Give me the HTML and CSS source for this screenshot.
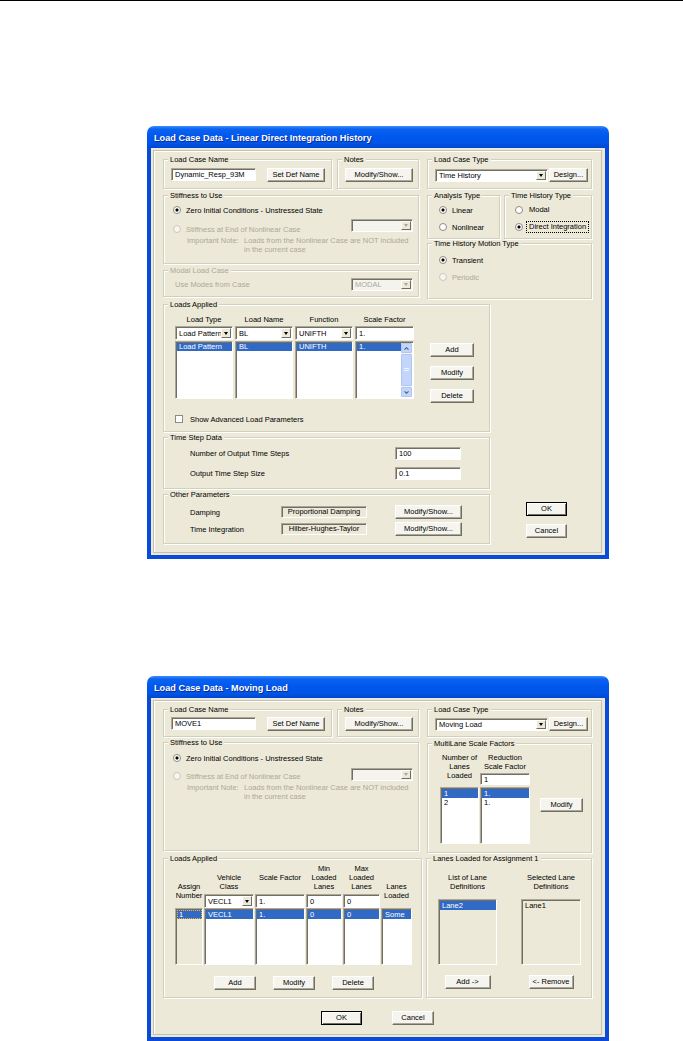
FILE: index.html
```html
<!DOCTYPE html>
<html lang="en">
<head>
    <meta charset="UTF-8">
    <title>Load Case Data</title>
    <link rel="stylesheet" href="styles.css">
</head>
<body>
<div class="top-rule"></div>
<div class="page">

    <!-- Linear Direct Integration History -->
    <div class="dialog dlg-history">
        <div class="titlebar">Load Case Data - Linear Direct Integration History</div>
        <div class="frame">
            <div class="panel">
                <div class="row row-a">
                    <div class="group g-name">
                        <span class="cap">Load Case Name</span>
                        <div class="line">
                            <div class="edit w-name">Dynamic_Resp_93M</div>
                            <button class="btn w-setdef">Set Def Name</button>
                        </div>
                    </div>
                    <div class="group g-notes">
                        <span class="cap">Notes</span>
                        <div class="line"><button class="btn w-modshow">Modify/Show...</button></div>
                    </div>
                    <div class="group g-type">
                        <span class="cap">Load Case Type</span>
                        <div class="line">
                            <div class="combo w-casetype"><span class="combo-text">Time History</span><span class="drop"></span></div>
                            <button class="btn w-design">Design...</button>
                        </div>
                    </div>
                </div>

                <div class="row row-b">
                    <div class="col-main">
                        <div class="group g-stiff">
                            <span class="cap">Stiffness to Use</span>
                            <div class="opt opt-1"><span class="radio on"></span><span class="opt-label">Zero Initial Conditions - Unstressed State</span></div>
                            <div class="opt opt-2 off">
                                <span class="radio"></span><span class="opt-label">Stiffness at End of Nonlinear Case</span>
                                <div class="combo combo-off w-nlcase"><span class="combo-text"></span><span class="drop"></span></div>
                            </div>
                            <div class="note off">
                                <span class="note-head">Important Note:</span>
                                <span>Loads from the Nonlinear Case are NOT included<br>in the current case</span>
                            </div>
                        </div>
                        <div class="group g-modal off">
                            <span class="cap">Modal Load Case</span>
                            <div class="line modal-line">
                                <span>Use Modes from Case</span>
                                <div class="combo combo-off w-nlcase"><span class="combo-text">MODAL</span><span class="drop"></span></div>
                            </div>
                        </div>
                    </div>
                    <div class="col-side">
                        <div class="pair">
                            <div class="group g-analysis">
                                <span class="cap">Analysis Type</span>
                                <div class="opt opt-1"><span class="radio on"></span><span class="opt-label">Linear</span></div>
                                <div class="opt opt-2"><span class="radio"></span><span class="opt-label">Nonlinear</span></div>
                            </div>
                            <div class="group g-thtype">
                                <span class="cap">Time History Type</span>
                                <div class="opt opt-1"><span class="radio"></span><span class="opt-label">Modal</span></div>
                                <div class="opt opt-2"><span class="radio on"></span><span class="opt-label focus">Direct Integration</span></div>
                            </div>
                        </div>
                        <div class="group g-motion">
                            <span class="cap">Time History Motion Type</span>
                            <div class="opt opt-1"><span class="radio on"></span><span class="opt-label">Transient</span></div>
                            <div class="opt opt-2 off"><span class="radio"></span><span class="opt-label">Periodic</span></div>
                        </div>
                    </div>
                </div>

                <div class="row row-c">
                    <div class="col-lower">
                        <div class="group g-loads">
                            <span class="cap">Loads Applied</span>
                            <div class="loads-body">
                                <div class="ld-grid">
                                    <div class="ld-head">Load Type</div>
                                    <div class="ld-head">Load Name</div>
                                    <div class="ld-head">Function</div>
                                    <div class="ld-head">Scale Factor</div>
                                    <div class="combo"><span class="combo-text">Load Pattern</span><span class="drop"></span></div>
                                    <div class="combo"><span class="combo-text">BL</span><span class="drop"></span></div>
                                    <div class="combo"><span class="combo-text">UNIFTH</span><span class="drop"></span></div>
                                    <div class="edit">1.</div>
                                    <div class="list"><div class="item sel">Load Pattern</div></div>
                                    <div class="list"><div class="item sel">BL</div></div>
                                    <div class="list"><div class="item sel">UNIFTH</div></div>
                                    <div class="list list-scroll">
                                        <div class="list-items"><div class="item sel">1.</div></div>
                                        <div class="sbar">
                                            <span class="sb-btn"><svg width="5" height="3" viewBox="0 0 5 3"><path d="M0.5 2.7 L2.5 0.7 L4.5 2.7" stroke="#4D6185" stroke-width="1.1" fill="none"/></svg></span>
                                            <span class="sb-thumb"><svg width="5" height="4" viewBox="0 0 5 4"><path d="M0 0.5h5M0 2.5h5" stroke="#F2F6FF" stroke-width="1"/></svg></span>
                                            <span class="sb-btn"><svg width="5" height="3" viewBox="0 0 5 3"><path d="M0.5 0.3 L2.5 2.3 L4.5 0.3" stroke="#4D6185" stroke-width="1.1" fill="none"/></svg></span>
                                        </div>
                                    </div>
                                </div>
                                <div class="btn-col">
                                    <button class="btn w-side">Add</button>
                                    <button class="btn w-side">Modify</button>
                                    <button class="btn w-side">Delete</button>
                                </div>
                            </div>
                            <div class="check-line"><span class="check"></span><span class="check-label">Show Advanced Load Parameters</span></div>
                        </div>
                        <div class="group g-step">
                            <span class="cap">Time Step Data</span>
                            <div class="param">
                                <span class="param-label">Number of Output Time Steps</span>
                                <div class="edit w-step">100</div>
                            </div>
                            <div class="param">
                                <span class="param-label">Output Time Step Size</span>
                                <div class="edit w-step">0.1</div>
                            </div>
                        </div>
                        <div class="group g-other">
                            <span class="cap">Other Parameters</span>
                            <div class="param">
                                <span class="param-label">Damping</span>
                                <div class="static">Proportional Damping</div>
                                <button class="btn w-other">Modify/Show...</button>
                            </div>
                            <div class="param">
                                <span class="param-label">Time Integration</span>
                                <div class="static">Hilber-Hughes-Taylor</div>
                                <button class="btn w-other">Modify/Show...</button>
                            </div>
                        </div>
                    </div>
                    <div class="ok-col">
                        <button class="btn btn-default w-ok">OK</button>
                        <button class="btn w-ok">Cancel</button>
                    </div>
                </div>
            </div>
        </div>
    </div>

    <!-- Moving Load -->
    <div class="dialog dlg-moving">
        <div class="titlebar">Load Case Data - Moving Load</div>
        <div class="frame">
            <div class="panel">
                <div class="row row-a">
                    <div class="group g-name">
                        <span class="cap">Load Case Name</span>
                        <div class="line">
                            <div class="edit w-name">MOVE1</div>
                            <button class="btn w-setdef">Set Def Name</button>
                        </div>
                    </div>
                    <div class="group g-notes">
                        <span class="cap">Notes</span>
                        <div class="line"><button class="btn w-modshow">Modify/Show...</button></div>
                    </div>
                    <div class="group g-type">
                        <span class="cap">Load Case Type</span>
                        <div class="line">
                            <div class="combo w-casetype"><span class="combo-text">Moving Load</span><span class="drop"></span></div>
                            <button class="btn w-design">Design...</button>
                        </div>
                    </div>
                </div>

                <div class="row row-b">
                    <div class="col-main">
                        <div class="group g-stiff">
                            <span class="cap">Stiffness to Use</span>
                            <div class="opt opt-1"><span class="radio on"></span><span class="opt-label">Zero Initial Conditions - Unstressed State</span></div>
                            <div class="opt opt-2 off">
                                <span class="radio"></span><span class="opt-label">Stiffness at End of Nonlinear Case</span>
                                <div class="combo combo-off w-nlcase"><span class="combo-text"></span><span class="drop"></span></div>
                            </div>
                            <div class="note off">
                                <span class="note-head">Important Note:</span>
                                <span>Loads from the Nonlinear Case are NOT included<br>in the current case</span>
                            </div>
                        </div>
                    </div>
                    <div class="col-side">
                        <div class="group g-multi">
                            <span class="cap">MultiLane Scale Factors</span>
                            <div class="multi-body">
                                <div class="ml-col ml-col1">
                                    <div class="ml-top">Number of<br>Lanes<br>Loaded</div>
                                    <div class="list h-ml"><div class="item sel">1</div><div class="item">2</div></div>
                                </div>
                                <div class="ml-col ml-col2">
                                    <div class="ml-top">
                                        <div class="ml-head">Reduction<br>Scale Factor</div>
                                        <div class="edit ml-edit">1</div>
                                    </div>
                                    <div class="list h-ml"><div class="item sel">1.</div><div class="item">1.</div></div>
                                </div>
                                <button class="btn w-mlmod">Modify</button>
                            </div>
                        </div>
                    </div>
                </div>

                <div class="row row-c">
                    <div class="group g-loads2">
                        <span class="cap">Loads Applied</span>
                        <div class="ld2-grid">
                            <div class="ld2-head span2 pt18">Assign<br>Number</div>
                            <div class="ld2-head pt9">Vehicle<br>Class</div>
                            <div class="ld2-head pt9">Scale Factor</div>
                            <div class="ld2-head">Min<br>Loaded<br>Lanes</div>
                            <div class="ld2-head">Max<br>Loaded<br>Lanes</div>
                            <div class="ld2-head span2 pt18">Lanes<br>Loaded</div>
                            <div class="combo"><span class="combo-text">VECL1</span><span class="drop"></span></div>
                            <div class="edit">1.</div>
                            <div class="edit">0</div>
                            <div class="edit">0</div>
                            <div class="list list-gray"><div class="item sel focus-item">1</div></div>
                            <div class="list"><div class="item sel">VECL1</div></div>
                            <div class="list"><div class="item sel">1.</div></div>
                            <div class="list"><div class="item sel">0</div></div>
                            <div class="list"><div class="item sel">0</div></div>
                            <div class="list"><div class="item sel">Some</div></div>
                        </div>
                        <div class="ld2-btns">
                            <button class="btn w-ld2">Add</button>
                            <button class="btn w-ld2">Modify</button>
                            <button class="btn w-ld2">Delete</button>
                        </div>
                    </div>
                    <div class="group g-lanes">
                        <span class="cap">Lanes Loaded for Assignment 1</span>
                        <div class="lanes-body">
                            <div class="lane-col">
                                <div class="lane-head">List of Lane<br>Definitions</div>
                                <div class="list list-gray h-lane"><div class="item sel">Lane2</div></div>
                                <button class="btn w-addlane">Add -&gt;</button>
                            </div>
                            <div class="lane-col lane-col2">
                                <div class="lane-head">Selected Lane<br>Definitions</div>
                                <div class="list list-gray h-lane"><div class="item">Lane1</div></div>
                                <button class="btn w-remove">&lt;- Remove</button>
                            </div>
                        </div>
                    </div>
                </div>

                <div class="dlg-buttons">
                    <button class="btn btn-default w-ok">OK</button>
                    <button class="btn w-cancel">Cancel</button>
                </div>
            </div>
        </div>
    </div>

</div>
</body>
</html>
```

FILE: styles.css
```css
* {
    box-sizing: border-box;
}

body {
    margin: 0;
    background: #fff;
    color: #000;
    font-family: "Liberation Sans", Arial, sans-serif;
    font-size: 7.5px;
}

.top-rule {
    height: 1px;
    background: #000;
}

.page {
    padding-left: 147px;
}

/* window */
.dialog {
    width: 462px;
}
.dlg-history {
    margin-top: 125px;
}
.dlg-moving {
    margin-top: 117px;
}

.titlebar {
    height: 22px;
    padding: 3px 0 0 7px;
    line-height: 19px;
    border-radius: 7px 7px 0 0;
    background: linear-gradient(#3C8EFB 0%, #0C62F0 14%, #0058EE 45%, #0054E6 80%, #0046CF 100%);
    color: #fff;
    font-weight: bold;
    font-size: 9.2px;
    text-shadow: 1px 1px #0B2A8C;
    white-space: nowrap;
}

.frame {
    background: #ECE9D8;
    border: 4px solid #0A4AD9;
    border-top: 0;
    padding: 2px 3px 2px 2px;
}

.panel {
    height: 403px;
    border: 1px solid #C4C1B0;
    box-shadow: inset 1px 1px #fff;
    padding-left: 9px;
}
.dlg-moving .panel {
    height: 335px;
}

/* group boxes */
.group {
    flex: none;
    border: 1px solid #D0D0BF;
    box-shadow: inset 1px 1px #fff, 1px 1px #fff;
}

.cap {
    display: block;
    width: max-content;
    height: 10px;
    margin: -5px 0 0 4px;
    padding: 0 2px;
    line-height: 10px;
    background: #ECE9D8;
    white-space: nowrap;
}

.off {
    color: #ACA899;
}

.row {
    display: flex;
    align-items: flex-start;
}

.line {
    display: flex;
    align-items: flex-start;
    margin-top: 3px;
}

/* controls */
.btn {
    flex: none;
    font: inherit;
    color: #000;
    padding: 0;
    background: #F5F4EF;
    border: 1px solid;
    border-color: #fff #716F64 #716F64 #fff;
    box-shadow: inset -1px -1px #ACA899;
    text-align: center;
    line-height: 1;
    white-space: nowrap;
}

.btn-default {
    border-color: #000;
    box-shadow: inset 1px 1px #fff, inset -1px -1px #716F64;
}

.edit {
    display: flex;
    align-items: center;
    padding-left: 3px;
    background: #fff;
    border: 1px solid;
    border-color: #ACA899 #fff #fff #ACA899;
    box-shadow: inset 1px 1px #716F64;
    white-space: nowrap;
    overflow: hidden;
}

.combo {
    flex: none;
    display: flex;
    padding: 1px;
    background: #fff;
    border: 1px solid;
    border-color: #ACA899 #fff #fff #ACA899;
    box-shadow: inset 1px 1px #716F64;
}

.combo-text {
    flex: 1;
    align-self: center;
    padding-left: 2px;
    overflow: hidden;
    white-space: nowrap;
}

.drop {
    flex: none;
    width: 10px;
    display: flex;
    align-items: center;
    justify-content: center;
    background: #ECE9D8;
    border: 1px solid;
    border-color: #fff #716F64 #716F64 #fff;
}

.drop::after {
    content: "";
    border-left: 2.5px solid transparent;
    border-right: 2.5px solid transparent;
    border-top: 3px solid #000;
}

.combo-off {
    background: #F4F3EE;
    color: #ACA899;
}
.combo-off .drop::after {
    border-top-color: #ACA899;
}

.radio {
    flex: none;
    width: 8px;
    height: 8px;
    border-radius: 50%;
    border: 1px solid #8E8C80;
    background: #fff;
}
.radio.on {
    background: radial-gradient(circle, #000 0 1.3px, #fff 1.8px);
}
.off .radio {
    border-color: #CBC8B9;
    background: #F6F5F0;
}

.check {
    flex: none;
    width: 8px;
    height: 8px;
    background: #fff;
    border: 1px solid #8E8C80;
}

.static {
    flex: none;
    width: 86px;
    height: 12px;
    line-height: 10px;
    text-align: center;
    border: 1px solid;
    border-color: #ACA899 #fff #fff #ACA899;
    box-shadow: inset 1px 1px #716F64;
    white-space: nowrap;
}

.list {
    background: #fff;
    border: 1px solid;
    border-color: #ACA899 #fff #fff #ACA899;
    box-shadow: inset 1px 1px #716F64;
    padding: 1px 0 0 1px;
    overflow: hidden;
}
.list-gray {
    background: #ECE9D8;
}

.item {
    height: 9px;
    line-height: 9px;
    padding-left: 2px;
    white-space: nowrap;
}

.sel {
    background: #316AC5;
    color: #fff;
}

.focus-item {
    outline: 1px dotted #F0B040;
    outline-offset: -1px;
}

.focus {
    border: 1px dotted #000;
}

/* row a: name / notes / type */
.row-a {
    margin-top: 8px;
}
.row-a .group {
    height: 30px;
}
.dlg-moving .row-a .group {
    height: 28px;
}
.dlg-moving .row-a .line {
    margin-top: 2px;
}
.row-a .line {
    padding-left: 7px;
}

.g-name {
    width: 169px;
}
.g-notes {
    width: 82px;
    margin-left: 5px;
}
.g-type {
    width: 165px;
    margin-left: 8px;
}

.w-name {
    width: 85px;
    height: 13px;
}
.w-setdef {
    width: 58px;
    height: 14px;
    margin-left: 11px;
}
.w-modshow {
    width: 68px;
    height: 14px;
}
.w-casetype {
    width: 113px;
    height: 13px;
    margin-top: 1px;
}
.w-design {
    width: 39px;
    height: 14px;
    margin-left: 1px;
}

/* row b */
.row-b {
    margin-top: 6px;
}
.dlg-moving .row-b {
    margin-top: 5px;
}

.col-main {
    width: 256px;
}
.col-side {
    width: 165px;
    margin-left: 8px;
}

.opt {
    display: flex;
    align-items: center;
    height: 10px;
    white-space: nowrap;
}
.opt-label {
    margin-left: 5px;
}

.g-stiff {
    height: 69px;
    padding-right: 5px;
}
.dlg-moving .g-stiff {
    height: 109px;
}
.g-stiff .opt {
    padding-left: 9px;
}
.g-stiff .opt-1 {
    margin-top: 4px;
}
.g-stiff .opt-2 {
    margin-top: 9px;
}
.dlg-moving .g-stiff .opt-1 {
    margin-top: 5px;
}
.dlg-moving .g-stiff .opt-2 {
    margin-top: 8px;
}

.w-nlcase {
    width: 62px;
    height: 13px;
    margin-left: auto;
}
.g-stiff .w-nlcase {
    align-self: flex-start;
    margin-top: -5px;
}
.dlg-moving .g-stiff .w-nlcase {
    margin-top: -3px;
}

.note {
    display: flex;
    margin-top: 2px;
    padding-left: 23px;
    line-height: 9px;
    white-space: nowrap;
}
.note-head {
    flex: none;
    width: 57px;
}

.g-modal {
    height: 27px;
    margin-top: 6px;
    padding-right: 5px;
}
.modal-line {
    align-items: center;
    height: 14px;
    margin-top: 1px;
    padding-left: 11px;
}

.pair {
    display: flex;
    gap: 4px;
}
.g-analysis {
    width: 73px;
    height: 44px;
}
.g-thtype {
    width: 88px;
    height: 44px;
}
.g-analysis .opt,
.g-motion .opt {
    padding-left: 11px;
}
.g-thtype .opt {
    padding-left: 10px;
}
.pair .opt-1 {
    margin-top: 4px;
}
.pair .opt-2 {
    margin-top: 7px;
}
.g-thtype .opt-label {
    margin-left: 3px;
    padding: 0 2px;
    line-height: 10px;
    border: 1px solid transparent;
}
.g-thtype .opt-label.focus {
    border: 1px dotted #000;
}

.g-motion {
    height: 56px;
    margin-top: 4px;
}
.g-motion .opt-1 {
    margin-top: 6px;
}
.g-motion .opt-2 {
    margin-top: 7px;
}

/* row c (history) */
.row-c {
    margin-top: 5px;
}
.col-lower {
    width: 327px;
}

.g-loads {
    height: 128px;
}
.loads-body {
    display: flex;
    align-items: flex-start;
    margin-top: 5px;
    padding-left: 11px;
}
.ld-grid {
    display: grid;
    grid-template-columns: 58px 58px 58px 59px;
    grid-template-rows: 10px 14px 58px;
    column-gap: 2px;
    row-gap: 1px;
}
.ld-grid .item {
    height: 8px;
    line-height: 8px;
}
.ld-head {
    text-align: center;
    line-height: 10px;
    white-space: nowrap;
}

.list-scroll {
    display: flex;
    padding: 1px 1px 1px 1px;
}
.list-items {
    flex: 1;
}
.sbar {
    flex: none;
    width: 11px;
    display: flex;
    flex-direction: column;
    gap: 1px;
    background: #F4F3EE;
}
.sb-btn,
.sb-thumb {
    display: flex;
    align-items: center;
    justify-content: center;
    background: #C4D5FC;
    border: 1px solid #B2C6F4;
    border-radius: 1px;
}
.sb-btn {
    height: 10px;
}
.sb-thumb {
    flex: 1;
}

.btn-col {
    display: flex;
    flex-direction: column;
    gap: 9px;
    margin-left: 16px;
    padding-top: 28px;
}
.w-side {
    width: 44px;
    height: 14px;
}

.check-line {
    display: flex;
    align-items: center;
    height: 10px;
    margin-top: 11px;
    padding-left: 11px;
}
.check-label {
    margin-left: 7px;
}

.param {
    display: flex;
    align-items: center;
    padding-left: 26px;
    white-space: nowrap;
}
.param-label {
    flex: none;
    width: 205px;
}

.g-step {
    height: 52px;
    margin-top: 5px;
}
.g-step .param {
    height: 13px;
    margin-top: 7px;
}
.g-step .param:first-of-type {
    margin-top: 4px;
}
.w-step {
    width: 66px;
    height: 13px;
}

.g-other {
    height: 50px;
    margin-top: 5px;
}
.g-other .param {
    height: 14px;
    margin-top: 3px;
}
.g-other .param:first-of-type {
    margin-top: 5px;
}
.g-other .param-label {
    width: 91px;
}
.w-other {
    width: 67px;
    height: 14px;
    margin-left: 28px;
}

.ok-col {
    display: flex;
    flex-direction: column;
    gap: 8px;
    margin-left: 36px;
    padding-top: 198px;
}
.w-ok {
    width: 41px;
    height: 14px;
}

/* moving load: multilane */
.g-multi {
    width: 165px;
    height: 110px;
    margin-top: 1px;
}
.multi-body {
    display: flex;
    align-items: flex-start;
    margin-top: 4px;
    padding-left: 12px;
}
.ml-col1 {
    width: 39px;
}
.ml-col2 {
    width: 50px;
    margin-left: 1px;
}
.ml-top {
    height: 34px;
    line-height: 9px;
    text-align: center;
    white-space: nowrap;
}
.ml-col1 .ml-top {
    margin: 0 -6px;
}
.ml-edit {
    height: 12px;
    margin-top: 2px;
    text-align: left;
}
.h-ml {
    height: 57px;
}
.w-mlmod {
    width: 43px;
    height: 14px;
    margin: 45px 0 0 10px;
}

/* moving load: loads applied */
.g-loads2 {
    width: 259px;
    height: 140px;
}
.ld2-grid {
    display: grid;
    grid-template-columns: 28px 50px 50px 36px 37px 31px;
    grid-template-rows: 30px 14px 57px;
    column-gap: 1px;
    margin-left: 11px;
}
.ld2-head {
    text-align: center;
    line-height: 9px;
    white-space: nowrap;
}
.span2 {
    grid-row: span 2;
}
.pt9 {
    padding-top: 9px;
}
.pt18 {
    padding-top: 18px;
}
.ld2-btns {
    display: flex;
    gap: 17px;
    margin-top: 11px;
    padding-left: 50px;
}
.w-ld2 {
    width: 42px;
    height: 14px;
}

.g-lanes {
    width: 166px;
    height: 140px;
    margin-left: 4px;
}
.lanes-body {
    display: flex;
    padding-left: 11px;
}
.lane-col {
    width: 59px;
    display: flex;
    flex-direction: column;
    align-items: center;
}
.lane-col2 {
    width: 60px;
    margin-left: 24px;
}
.lane-head {
    height: 35px;
    padding-top: 9px;
    line-height: 9px;
    text-align: center;
    white-space: nowrap;
}
.h-lane {
    width: 100%;
    height: 66px;
}
.w-addlane {
    width: 46px;
    height: 14px;
    margin-top: 10px;
}
.w-remove {
    width: 45px;
    height: 14px;
    margin-top: 10px;
}

.dlg-buttons {
    display: flex;
    margin-top: 13px;
    padding-left: 158px;
}
.w-cancel {
    width: 42px;
    height: 14px;
    margin-left: 30px;
}
```
